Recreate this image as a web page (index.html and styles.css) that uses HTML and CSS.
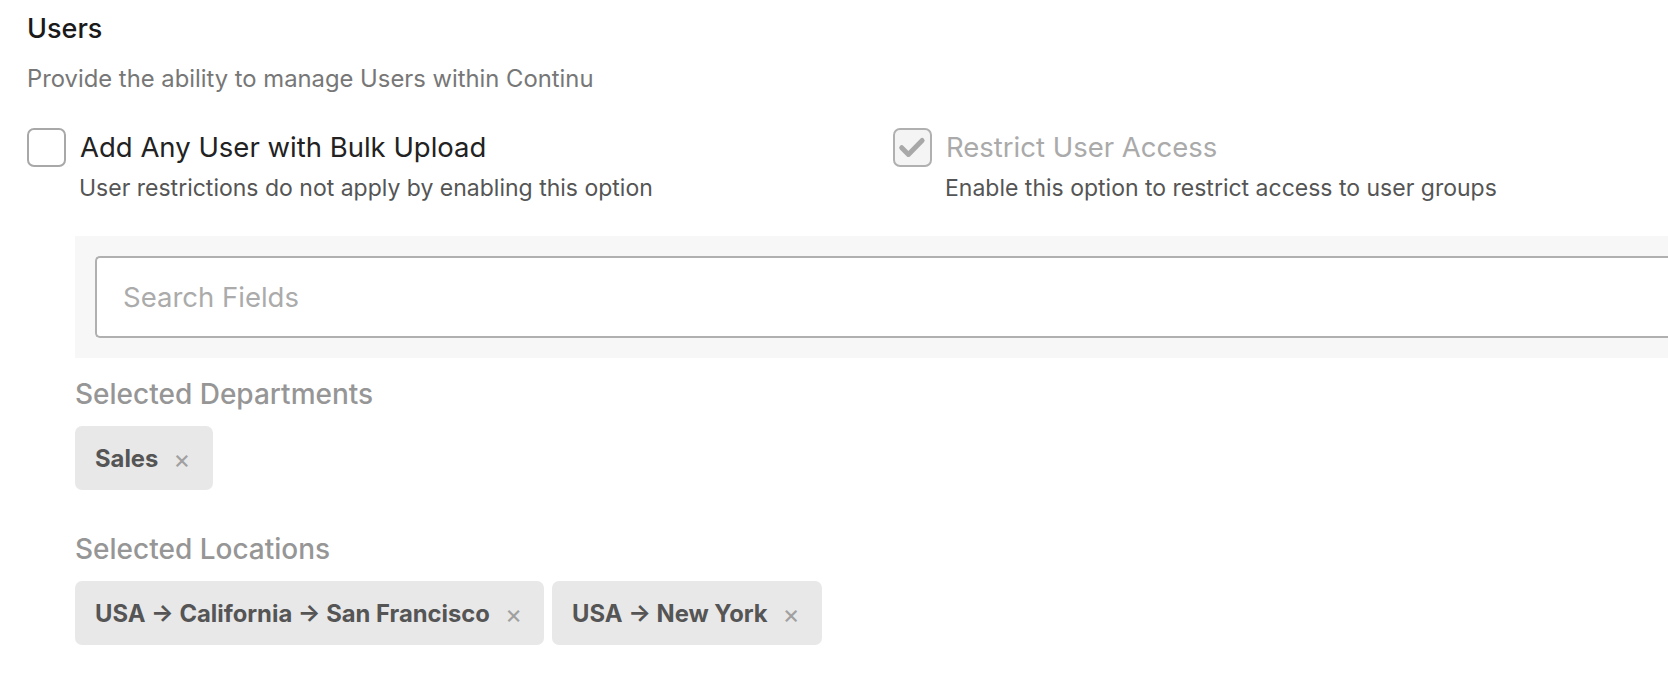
FILE: index.html
```html
<!DOCTYPE html>
<html lang="en">
<head>
<meta charset="utf-8">
<title>Users</title>
<link rel="stylesheet" href="styles.css">
</head>
<body>
<main class="page">
  <h2 class="title">Users</h2>
  <p class="desc">Provide the ability to manage Users within Continu</p>
  <div class="options">
    <div class="option">
      <div class="opt-row">
        <span class="checkbox"></span>
        <span class="opt-label">Add Any User with Bulk Upload</span>
      </div>
      <div class="opt-sub">User restrictions do not apply by enabling this option</div>
    </div>
    <div class="option">
      <div class="opt-row">
        <span class="checkbox checked">
          <svg viewBox="0 0 24 24" width="36" height="36"><path d="M4.6 11.8l4.6 4.6 9.4-9.6" fill="none" stroke="#a8a8a8" stroke-width="3.4" stroke-linecap="round" stroke-linejoin="round"/></svg>
        </span>
        <span class="opt-label disabled">Restrict User Access</span>
      </div>
      <div class="opt-sub">Enable this option to restrict access to user groups</div>
    </div>
  </div>
  <section class="restrict">
    <div class="search-panel">
      <div class="search-input">Search Fields</div>
    </div>
    <h3 class="sel-title">Selected Departments</h3>
    <div class="chips">
      <span class="chip">Sales<span class="x">×</span></span>
    </div>
    <h3 class="sel-title loc">Selected Locations</h3>
    <div class="chips">
      <span class="chip">USA → California → San Francisco<span class="x">×</span></span>
      <span class="chip">USA → New York<span class="x">×</span></span>
    </div>
  </section>
</main>
</body>
</html>
```
FILE: styles.css
```css
html, body {
  margin: 0;
  padding: 0;
  background: #ffffff;
  overflow: hidden;
}
body {
  font-family: Inter, "Liberation Sans", Arial, sans-serif;
  color: #222;
}
.page {
  width: 1800px;
  padding: 12px 0 0 27px;
}
.title {
  margin: 0;
  font-size: 27px;
  line-height: 34px;
  font-weight: 500;
  color: #1a1a1a;
}
.desc {
  margin: 19px 0 0;
  font-size: 23.8px;
  line-height: 28px;
  color: #777;
}
.options {
  display: grid;
  grid-template-columns: 866px 866px;
  margin-top: 35px;
}
.opt-row {
  display: flex;
  align-items: center;
  gap: 14px;
}
.checkbox {
  width: 39px;
  height: 39px;
  box-sizing: border-box;
  border: 2px solid #a8a8a8;
  border-radius: 7px;
  background: #fff;
  display: flex;
  align-items: center;
  justify-content: center;
  flex: none;
}
.checkbox.checked {
  background: #f4f4f4;
  border-color: #b0b0b0;
}
.opt-label {
  font-size: 27.5px;
  line-height: 38px;
  color: #222;
  position: relative;
  top: -1px;
}
.opt-label.disabled {
  color: #aaa;
}
.opt-sub {
  margin: 8px 0 0 52px;
  font-size: 23px;
  line-height: 26px;
  color: #555;
}
.restrict {
  margin: 35px 0 0 48px;
}
.search-panel {
  background: #f7f7f7;
  padding: 20px;
}
.search-input {
  height: 82px;
  box-sizing: border-box;
  border: 2px solid #b0b0b0;
  border-right: none;
  border-radius: 5px 0 0 5px;
  background: #fff;
  padding-left: 26px;
  display: flex;
  align-items: center;
  font-size: 27.5px;
  color: #ababab;
}
.sel-title {
  margin: 20px 0 0;
  font-size: 28px;
  line-height: 32px;
  font-weight: 500;
  color: #969696;
}
.sel-title.loc {
  margin-top: 43px;
}
.chips {
  display: flex;
  gap: 8px;
  margin-top: 16px;
}
.chip {
  display: inline-flex;
  align-items: center;
  height: 64px;
  padding: 0 22px 0 20px;
  background: #e8e8e8;
  border-radius: 7px;
  font-size: 23.8px;
  font-weight: 700;
  color: #555;
}
.x {
  margin-left: 15px;
  font-size: 26px;
  font-weight: 400;
  color: #a0a0a0;
}
```
